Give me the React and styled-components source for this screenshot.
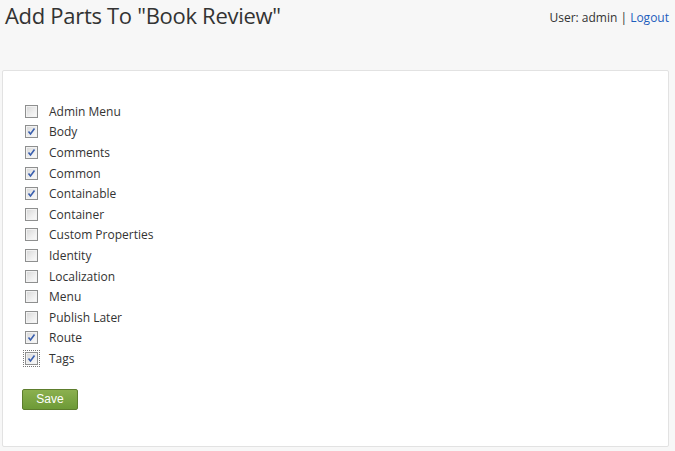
import React from 'react';
import styled, { createGlobalStyle } from 'styled-components';

const GlobalStyle = createGlobalStyle`
  html, body {
    margin: 0;
    padding: 0;
    background: #f7f7f7;
    font-family: "Segoe UI", "Open Sans", "Liberation Sans", sans-serif;
    color: #333;
  }
`;

const Page = styled.div`
  width: 675px;
  height: 451px;
  box-sizing: border-box;
  padding: 0 6px 4px 2px;
  display: flex;
  flex-direction: column;
  overflow: hidden;
`;

const Header = styled.header`
  display: flex;
  justify-content: space-between;
  align-items: flex-start;
  height: 70px;
`;

const Title = styled.h1`
  margin: 0;
  padding: 0 0 0 3px;
  font-weight: 400;
  font-size: 22px;
  line-height: 30px;
  color: #333;
  letter-spacing: -0.3px;
`;

const UserBox = styled.div`
  font-size: 12px;
  line-height: 16px;
  padding-top: 10px;
  color: #333;
`;

const Link = styled.a`
  color: #1e5ebd;
  text-decoration: none;
`;

const Panel = styled.main`
  flex: 1;
  background: #fff;
  border: 1px solid #e2e2e2;
  border-radius: 2px;
  padding: 30px 20px 0 19px;
`;

const List = styled.ul`
  list-style: none;
  margin: 0;
  padding: 0 0 0 1px;
  display: flex;
  flex-direction: column;
`;

const Row = styled.li`
  display: flex;
  align-items: center;
  height: 20.6px;
  font-size: 12px;
  color: #333;
`;

const BoxWrap = styled.span`
  width: 17px;
  height: 17px;
  box-sizing: border-box;
  margin-right: 9px;
  display: flex;
  align-items: center;
  justify-content: center;
  outline: ${p => (p.$focus ? '1px dotted #777' : 'none')};
  outline-offset: -1px;
`;

const Box = styled.span`
  width: 13px;
  height: 13px;
  box-sizing: border-box;
  border: 1px solid #8e8f8f;
  background: linear-gradient(135deg, #d6d6d6 0%, #efefef 60%, #fbfbfb 100%);
  box-shadow: inset 0 0 0 1px #f2f2f2;
  display: flex;
  align-items: center;
  justify-content: center;
`;

const SaveButton = styled.button`
  margin-top: 20px;
  width: 56px;
  height: 21px;
  padding: 0;
  border: 1px solid #5d7d2d;
  border-radius: 2px;
  background: linear-gradient(#8bb04f, #6d9a37);
  color: #fff;
  font-family: "Liberation Sans", Arial, sans-serif;
  font-size: 12px;
  cursor: pointer;
`;

const parts = [
  ['Admin Menu', false],
  ['Body', true],
  ['Comments', true],
  ['Common', true],
  ['Containable', true],
  ['Container', false],
  ['Custom Properties', false],
  ['Identity', false],
  ['Localization', false],
  ['Menu', false],
  ['Publish Later', false],
  ['Route', true],
  ['Tags', true],
];

const Check = () => (
  <svg width="9" height="9" viewBox="0 0 9 9">
    <path d="M1.5 4.5 L3.5 7 L7.5 1.5" fill="none" stroke="#3a5fae" strokeWidth="1.6" />
  </svg>
);

const App = () => (
  <Page>
    <GlobalStyle />
    <Header>
      <Title>Add Parts To "Book Review"</Title>
      <UserBox>
        User: admin | <Link href="#">Logout</Link>
      </UserBox>
    </Header>
    <Panel>
      <List>
        {parts.map(([name, checked], i) => (
          <Row key={name}>
            <BoxWrap $focus={i === parts.length - 1}>
              <Box>{checked && <Check />}</Box>
            </BoxWrap>
            {name}
          </Row>
        ))}
      </List>
      <SaveButton>Save</SaveButton>
    </Panel>
  </Page>
);

export default App;
